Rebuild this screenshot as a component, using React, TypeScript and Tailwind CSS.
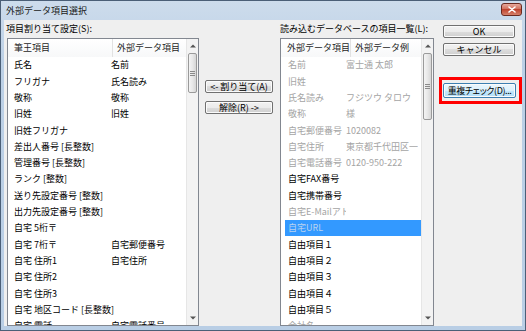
import React from "react";

const leftRows: [string, string][] = [
  ["氏名", "名前"],
  ["フリガナ", "氏名読み"],
  ["敬称", "敬称"],
  ["旧姓", "旧姓"],
  ["旧姓フリガナ", ""],
  ["差出人番号 [長整数]", ""],
  ["管理番号 [長整数]", ""],
  ["ランク [整数]", ""],
  ["送り先設定番号 [整数]", ""],
  ["出力先設定番号 [整数]", ""],
  ["自宅 5桁〒", ""],
  ["自宅 7桁〒", "自宅郵便番号"],
  ["自宅 住所1", "自宅住所"],
  ["自宅 住所2", ""],
  ["自宅 住所3", ""],
  ["自宅 地区コード [長整数]", ""],
  ["自宅 電話", "自宅電話番号"],
];

type R = { a: string; b?: string; gray?: boolean; sel?: boolean };
const rightRows: R[] = [
  { a: "名前", b: "富士通 太郎", gray: true },
  { a: "旧姓", gray: true },
  { a: "氏名読み", b: "フジツウ タロウ", gray: true },
  { a: "敬称", b: "様", gray: true },
  { a: "自宅郵便番号", b: "1020082", gray: true },
  { a: "自宅住所", b: "東京都千代田区一", gray: true },
  { a: "自宅電話番号", b: "0120-950-222", gray: true },
  { a: "自宅FAX番号" },
  { a: "自宅携帯番号" },
  { a: "自宅E-Mailアドレス", gray: true },
  { a: "自宅URL", gray: true, sel: true },
  { a: "自由項目１" },
  { a: "自由項目２" },
  { a: "自由項目３" },
  { a: "自由項目４" },
  { a: "自由項目５" },
  { a: "会社名", gray: true },
];

function Arrow({ down }: { down?: boolean }) {
  return (
    <svg width="6" height="4" viewBox="0 0 6 4">
      <path d={down ? "M0 0.5H6L3 3.5Z" : "M0 3.5H6L3 0.5Z"} fill="#555" />
    </svg>
  );
}

function Grip() {
  return (
    <svg width="5" height="5" viewBox="0 0 5 5">
      <path d="M0 0.5H5M0 2.5H5M0 4.5H5" stroke="#8a8a8a" strokeWidth="1" />
    </svg>
  );
}

function ScrollBar({ thumbClass }: { thumbClass: string }) {
  return (
    <div className="flex w-[12px] shrink-0 flex-col border-l border-[#e6e6e6] bg-[#f3f3f3]">
      <div className="flex h-[14px] shrink-0 items-center justify-center">
        <Arrow />
      </div>
      <div
        className={`mx-[1px] flex shrink-0 items-center justify-center rounded-[2px] border border-[#9a9a9a] bg-[linear-gradient(90deg,#f4f4f4,#e8e8e8_50%,#d6d6d6)] ${thumbClass}`}
      >
        <Grip />
      </div>
      <div className="flex-1" />
      <div className="flex h-[14px] shrink-0 items-center justify-center">
        <Arrow down />
      </div>
    </div>
  );
}

function Btn({
  children,
  className = "",
  focus,
}: {
  children: React.ReactNode;
  className?: string;
  focus?: boolean;
}) {
  return (
    <div
      className={`flex items-center justify-center whitespace-nowrap rounded-[2px] border leading-none text-black shadow-[inset_0_0_0_1px_#fbfbfb] ${
        focus
          ? "border-[#3c7fb1] bg-[linear-gradient(#eaf6fd_0%,#dcf1fc_50%,#c4e8fc_50%,#b2dffa_100%)]"
          : "border-[#707070] bg-[linear-gradient(#f2f2f2_0%,#ebebeb_50%,#dddddd_50%,#cfcfcf_100%)]"
      } ${className}`}
    >
      {children}
    </div>
  );
}

export default function App() {
  return (
    <div className="flex h-[331px] w-[526px] flex-col overflow-hidden border border-[#4b5f77] bg-[linear-gradient(#cddcec,#bcd0e6_60px,#b9cee5)] font-['Noto_Sans_CJK_JP','Noto_Sans',sans-serif] text-[9px] text-black">
      {/* title bar */}
      <div className="flex h-[19px] shrink-0 items-start justify-between">
        <div className="pl-[5px] pt-[4px] leading-[11px] text-[#1a1a1a]">外部データ項目選択</div>
        <div className="mr-[3px] mt-[2px] flex h-[13px] w-[21px] items-center justify-center rounded-[3px] border border-[#6b2a20] bg-[linear-gradient(#e7a99c,#cf6a56_50%,#c0442f_50%,#d5806a)]">
          <svg width="8" height="7" viewBox="0 0 8 7">
            <path d="M1 1L7 6M7 1L1 6" stroke="#fff" strokeWidth="1.6" strokeLinecap="round" />
          </svg>
        </div>
      </div>

      {/* client */}
      <div className="mx-[3px] flex h-[306px] shrink-0 bg-[#efefef]">
        {/* left column */}
        <div className="ml-[3px] flex w-[192px] shrink-0 flex-col">
          <div className="-ml-[1px] mt-[2px] h-[14px] leading-[14px]">項目割り当て設定(S):</div>
          <div className="mt-[2px] flex h-[288px] border border-[#828790] bg-white">
            <div className="flex min-w-0 flex-1 flex-col overflow-hidden">
              <div className="flex h-[18px] shrink-0 items-center bg-[linear-gradient(#ffffff,#f7f8f9)] text-[#1e1e1e]">
                <div className="flex h-full w-[105px] items-center border-r border-[#e2e2e2] pl-[6px]">筆王項目</div>
                <div className="whitespace-nowrap pl-[4px]">外部データ項目</div>
              </div>
              {leftRows.map(([a, b], i) => (
                <div key={i} className="flex h-[16.3px] shrink-0 items-center whitespace-nowrap pl-[6px]">
                  <div className="w-[97px] shrink-0">{a}</div>
                  <div>{b}</div>
                </div>
              ))}
            </div>
            <ScrollBar thumbClass="h-[40px]" />
          </div>
        </div>

        {/* middle column */}
        <div className="flex w-[81px] shrink-0 flex-col pl-[6px] pt-[60px]">
          <Btn className="h-[13px] w-[68px]">&lt;- 割り当て(A)</Btn>
          <Btn className="mt-[8px] h-[13px] w-[68px]">解除(R) -&gt;</Btn>
        </div>

        {/* right list column */}
        <div className="flex w-[154px] shrink-0 flex-col">
          <div className="mt-[2px] h-[14px] whitespace-nowrap leading-[14px]">読み込むデータベースの項目一覧(L):</div>
          <div className="mt-[2px] flex h-[288px] border border-[#828790] bg-white">
            <div className="flex min-w-0 flex-1 flex-col overflow-hidden">
              <div className="flex h-[18px] shrink-0 items-center bg-[linear-gradient(#ffffff,#f7f8f9)] text-[#1e1e1e]">
                <div className="flex h-full w-[70px] items-center whitespace-nowrap border-r border-[#e2e2e2] pl-[6px]">外部データ項目</div>
                <div className="whitespace-nowrap pl-[4px]">外部データ例</div>
              </div>
              {rightRows.map((r, i) => (
                <div
                  key={i}
                  className={`ml-[4px] flex h-[16.3px] shrink-0 items-center overflow-hidden whitespace-nowrap pl-[3px] ${
                    r.sel ? "bg-[#3399ff] text-[#b9d3f0]" : r.gray ? "text-[#a4a4a4]" : "text-black"
                  }`}
                >
                  <div className="w-[58px] shrink-0 overflow-hidden">{r.a}</div>
                  <div className="overflow-hidden">{r.b}</div>
                </div>
              ))}
            </div>
            <ScrollBar thumbClass="h-[67px]" />
          </div>
        </div>

        {/* right buttons */}
        <div className="ml-[9px] flex w-[73px] shrink-0 flex-col">
          <Btn className="mt-[5px] h-[13px] w-[72px]">OK</Btn>
          <Btn className="mt-[5px] h-[13px] w-[72px]">キャンセル</Btn>
          <div className="-ml-[4px] mt-[21px] flex h-[27px] w-[83px] items-center border-[3px] border-[#ff0000] pl-[1px]">
            <Btn focus className="h-[15px] w-[73px] tracking-[-0.4px] [font-feature-settings:'palt']">重複チェック(D)...</Btn>
          </div>
        </div>
      </div>
    </div>
  );
}
